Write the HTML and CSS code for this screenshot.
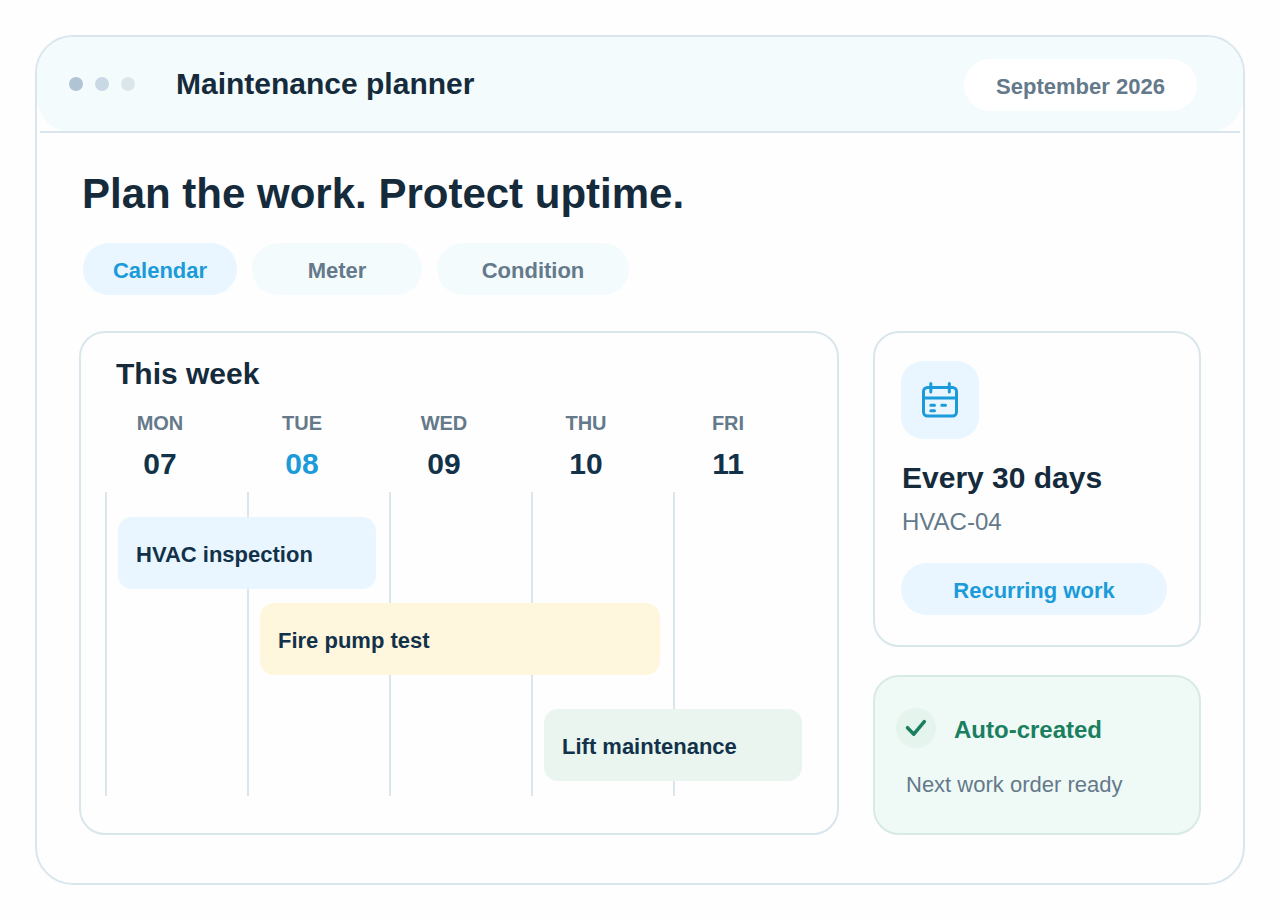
FILE: index.html
```html
<!DOCTYPE html>
<html lang="en">
  <head>
    <meta charset="utf-8" />
    <meta name="viewport" content="width=device-width, initial-scale=1" />
    <title>Maintenance planner</title>
    <link rel="stylesheet" href="styles.css">
  </head>
  <body>
    <div class="window">
      <header class="titlebar">
        <div class="dots"><span></span><span></span><span></span></div>
        <p class="app-name">Maintenance planner</p>
        <button type="button" class="pill month">September 2026</button>
      </header>
      <hr class="divider" />

      <main>
        <h1>Plan the work. Protect uptime.</h1>
        <nav class="tabs">
          <button type="button" class="pill active">Calendar</button>
          <button type="button" class="pill meter">Meter</button>
          <button type="button" class="pill condition">Condition</button>
        </nav>

        <div class="panels">
          <section class="card week">
            <h2>This week</h2>
            <ol class="days">
              <li><span>MON</span><b>07</b></li>
              <li class="today"><span>TUE</span><b>08</b></li>
              <li><span>WED</span><b>09</b></li>
              <li><span>THU</span><b>10</b></li>
              <li><span>FRI</span><b>11</b></li>
            </ol>
            <div class="schedule">
              <div class="event hvac">HVAC inspection</div>
              <div class="event pump">Fire pump test</div>
              <div class="event lift">Lift maintenance</div>
            </div>
          </section>

          <aside>
            <section class="card recurring">
              <div class="icon">
                <svg width="40" height="40" viewBox="0 0 40 40" fill="none" stroke="currentColor" stroke-width="3" stroke-linecap="round" stroke-linejoin="round">
                  <rect x="3.5" y="7.5" width="33" height="28.5" rx="4" />
                  <path d="M3.5 18h33M10.8 3.5v8.500M29.3 3.5v8.500" />
                  <path d="M10.8 25.3h3.700M21.8 25.3h3.700M10.8 30.700h3.700" />
                </svg>
              </div>
              <h2>Every 30 days</h2>
              <p>HVAC-04</p>
              <button type="button" class="pill active">Recurring work</button>
            </section>

            <section class="card created">
              <h3>
                <span class="check">
                  <svg width="40" height="40" viewBox="0 0 40 40" fill="none" stroke="currentColor" stroke-width="3.500" stroke-linecap="round" stroke-linejoin="round">
                    <path d="M11.5 19.700l6.300 6.500 10.500-12.500" />
                  </svg>
                </span>
                <span class="status">Auto-created</span>
              </h3>
              <p>Next work order ready</p>
            </section>
          </aside>
        </div>
      </main>
    </div>
  </body>
</html>
```

FILE: styles.css
```css
* {
  box-sizing: border-box;
}

body {
  margin: 35px;
  background-color: #fefefe;
  color: #152b3c;
  font-family: "Liberation Sans", Arial, sans-serif;
}

h1,
h2,
h3,
p,
ol {
  margin: 0;
  padding: 0;
}

.window {
  border: 2px solid #d9e6ed;
  border-radius: 38px;
}

.titlebar {
  display: flex;
  align-items: center;
  height: 96px;
  padding: 0 46px 0 32px;
  border-radius: 36px;
  background-color: #f3fbfd;
}

.dots {
  display: flex;
  gap: 12px;
  padding-bottom: 2px;
}

.dots span {
  width: 14px;
  height: 14px;
  border-radius: 50%;
  background-color: #b0c4d4;
}

.dots span:nth-child(2) {
  background-color: #c8d9e5;
}

.dots span:nth-child(3) {
  background-color: #dbe6ec;
}

.app-name {
  margin-left: 41px;
  padding-bottom: 2px;
  font-size: 30px;
  font-weight: 700;
}

.divider {
  height: 2px;
  margin: -2px 3px 0;
  border: 0;
  background-color: #dbe5ec;
}

.pill {
  height: 52px;
  padding: 4px 24px 0;
  border: 0;
  border-radius: 26px;
  background-color: #f3fbfd;
  color: #64798a;
  font-family: inherit;
  font-size: 22px;
  font-weight: 700;
  cursor: pointer;
}

.pill.active {
  background-color: #e9f6ff;
  color: #1b9bd9;
}

.month {
  min-width: 233px;
  margin-left: auto;
  background-color: #fff;
}

main {
  padding: 37px 42px 48px;
}

h1 {
  padding-left: 3px;
  font-size: 42px;
  line-height: 48px;
}

h2 {
  font-size: 30px;
  line-height: 34px;
}

.tabs {
  display: flex;
  gap: 15px;
  margin-top: 25px;
  padding-left: 4px;
}

.tabs .pill {
  min-width: 154px;
}

.tabs .meter {
  min-width: 170px;
}

.tabs .condition {
  min-width: 192px;
}

.panels {
  display: grid;
  grid-template-columns: minmax(0, 1fr) 328px;
  gap: 34px;
  margin-top: 36px;
}

.card {
  border: 2px solid #d9e6ec;
  border-radius: 26px;
}

.week {
  padding: 24px 22px 37px 24px;
}

.week h2 {
  padding-left: 11px;
}

.days {
  display: grid;
  grid-template-columns: repeat(5, 1fr);
  margin-top: 20px;
  list-style: none;
}

.days li {
  display: flex;
  flex-direction: column;
  gap: 12px;
  align-items: center;
  padding-right: 32px;
}

.days span {
  color: #64798a;
  font-size: 20px;
  font-weight: 700;
  line-height: 24px;
}

.days b {
  color: #12324a;
  font-size: 30px;
  line-height: 34px;
}

.days .today b {
  color: #1b9bd9;
}

.schedule {
  display: grid;
  grid-template-columns: repeat(5, 1fr);
  grid-template-rows: 72px 72px 92px;
  row-gap: 14px;
  margin-top: 11px;
  padding: 25px 0 15px;
  background: linear-gradient(to right, #dbe5ec 2px, transparent 2px) 0 0 / 20% 100%;
}

.event {
  margin: 0 13px;
  padding: 2px 18px 0;
  border-radius: 14px;
  color: #12324a;
  font-size: 22px;
  font-weight: 700;
  line-height: 72px;
}

.hvac {
  grid-column: 1 / span 2;
  background-color: #e9f6ff;
}

.pump {
  grid-column: 2 / span 3;
  background-color: #fff7dd;
}

.lift {
  grid-column: 4 / span 2;
  margin-top: 20px;
  background-color: #eaf5f0;
}

aside {
  display: flex;
  flex-direction: column;
  gap: 28px;
}

.recurring {
  padding: 28px 32px 30px 26px;
}

.icon {
  display: grid;
  place-items: center;
  width: 78px;
  height: 78px;
  border-radius: 22px;
  background-color: #e9f6ff;
  color: #1b9bd9;
}

.recurring h2 {
  margin-top: 22px;
  padding-left: 1px;
}

.recurring p {
  margin-top: 13px;
  padding-left: 1px;
  color: #64798a;
  font-size: 24px;
  line-height: 28px;
}

.recurring .pill {
  width: 100%;
  margin-top: 27px;
}

.created {
  flex: 1;
  padding: 31px 21px;
  border-color: #d8ebe2;
  background-color: #effaf7;
}

.created h3 {
  display: flex;
  align-items: center;
  gap: 18px;
  color: #1a7f5f;
  font-size: 24px;
}

.check {
  display: flex;
  width: 40px;
  height: 40px;
  border-radius: 50%;
  background-color: #e6f4ee;
}

.status {
  padding-top: 4px;
}

.created p {
  margin-top: 24px;
  padding-left: 10px;
  color: #64798a;
  font-size: 22px;
  line-height: 26px;
}
```
